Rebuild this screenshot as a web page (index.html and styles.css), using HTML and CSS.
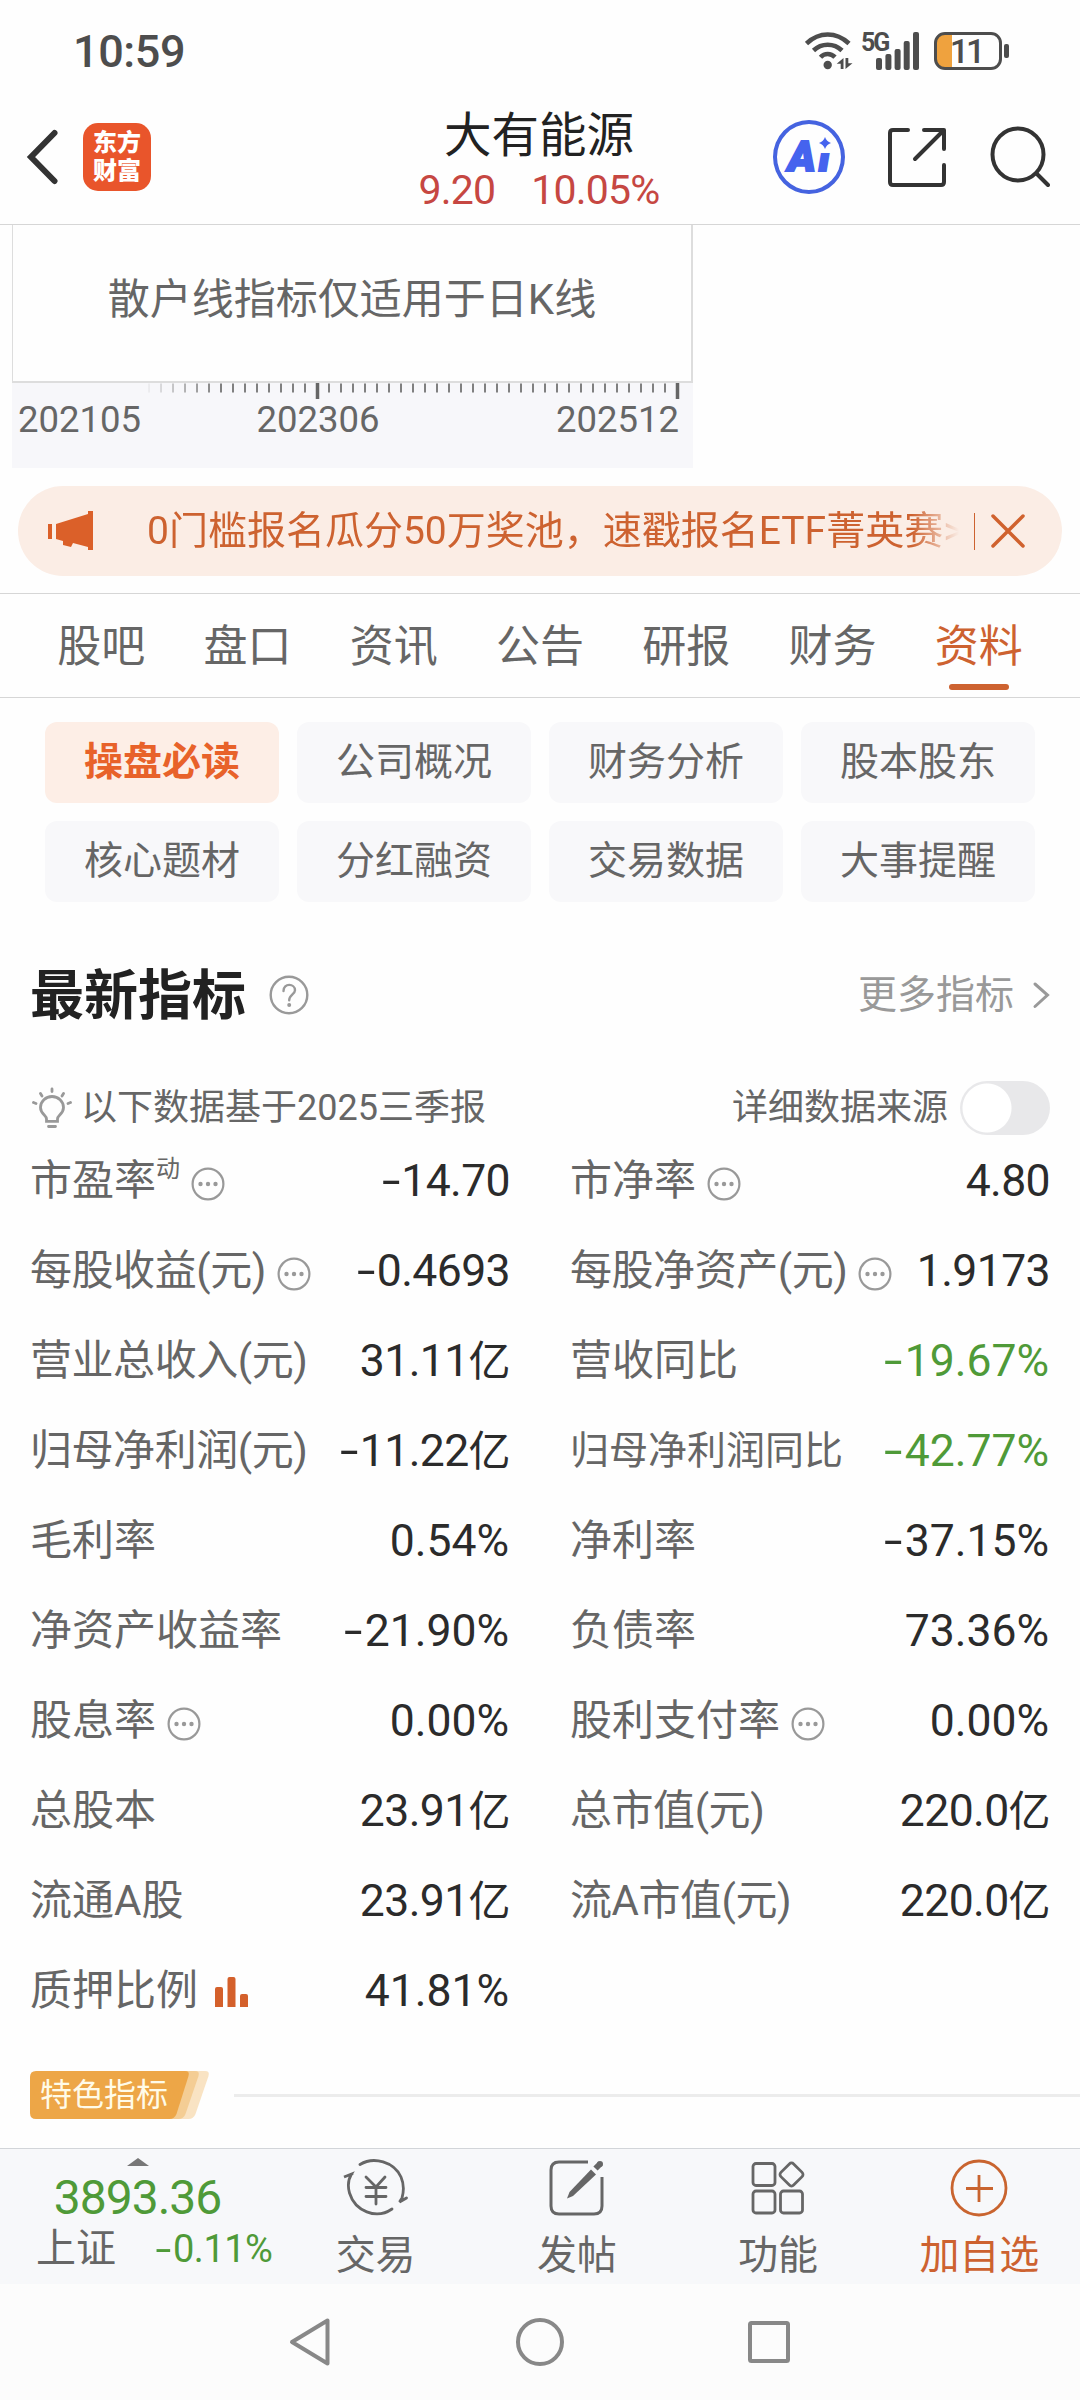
FILE: index.html
```html
<!DOCTYPE html>
<html lang="zh-CN">
<head>
    <meta charset="utf-8">
    <title>大有能源</title>
    <link rel="stylesheet" href="styles.css">
</head>
<body>
<svg width="0" height="0" class="defs">
    <symbol id="more-dots" viewBox="0 0 34 34">
        <circle cx="17" cy="17" r="15.4" fill="none" stroke="#999" stroke-width="2.2"/>
        <circle cx="9.5" cy="17" r="2.2" fill="#999"/><circle cx="17" cy="17" r="2.2" fill="#999"/><circle cx="24.5" cy="17" r="2.2" fill="#999"/>
    </symbol>
</svg>

<div class="status">
    <span class="time">10:59</span>
    <div class="status-icons">
        <svg class="wifi" width="48" height="40" viewBox="0 0 48 40" fill="none" stroke="#4d4d4d" stroke-width="4.6">
            <path d="M1.500 12.500Q11 3.500 22.700 3.500T44 12.500"/>
            <path d="M8.500 19.500Q14.500 13.700 22.700 13.700T37 19.500"/>
            <path d="M15.500 26.200Q18.500 23 22.700 23T30 26.200"/>
            <circle cx="22.700" cy="34" r="4.200" fill="#4d4d4d" stroke="none"/>
            <path d="M38.500 27v11h-2.800v-5.200h-4zM40.500 27v11l7-5.700h-4.200V27z" fill="#4d4d4d" stroke="none"/>
        </svg>
        <span class="net">5G</span>
        <svg class="bars" width="44" height="38" viewBox="0 0 44 38" fill="#4d4d4d">
            <rect x="0" y="26" width="6" height="12" rx="2"/><rect x="9.400" y="22" width="6" height="16" rx="2"/><rect x="18.600" y="17" width="6" height="21" rx="2"/><rect x="27.700" y="9" width="6" height="29" rx="2"/><rect x="37" y="0" width="6" height="38" rx="2"/>
        </svg>
        <div class="battery"><span>11</span></div>
        <i class="nub"></i>
    </div>
</div>

<div class="header">
    <div class="head-left">
        <svg width="34" height="56" viewBox="0 0 34 56" fill="none" stroke="#333" stroke-width="6" stroke-linecap="round"><path d="M29.500 4L6 28l23.500 24"/></svg>
        <div class="logo"><span>东方</span><span>财富</span></div>
    </div>
    <div class="head-title">
        <h1>大有能源</h1>
        <p><span>9.20</span><span>10.05%</span></p>
    </div>
    <div class="head-right">
        <div class="ai"><b>A</b><b class="i">i</b><svg width="12" height="12" viewBox="0 0 12 12"><path d="M6 0Q7.500 4.500 12 6Q7.500 7.500 6 12Q4.500 7.500 0 6Q4.500 4.500 6 0z" fill="#4563ee"/></svg></div>
        <svg class="share" width="60" height="62" viewBox="0 0 60 62" fill="none" stroke="#333" stroke-width="4" stroke-linecap="round" stroke-linejoin="round"><path d="M22 4H7Q4 4 4 7v49q0 3 3 3h48q3 0 3-3V39M38 4h20v19M57 5L29 33"/></svg>
        <svg width="60" height="62" viewBox="0 0 60 62" fill="none" stroke="#333" stroke-width="4" stroke-linecap="round"><ellipse cx="28" cy="28.500" rx="25.500" ry="26"/><path d="M46.500 47.500L58 59"/></svg>
    </div>
</div>

<div class="chart">
    <div class="chart-box">散户线指标仅适用于日K线</div>
    <div class="axis">
        <svg width="680" height="16" viewBox="0 0 680 16">
            <defs>
                <linearGradient id="fade" x1="0" x2="1"><stop offset="0" stop-color="#f7f7fa"/><stop offset="1" stop-color="#f7f7fa" stop-opacity="0"/></linearGradient>
            </defs>
            <path d="M136 5H668" stroke="#808080" stroke-width="9" stroke-dasharray="2 10"/>
            <rect x="130" y="0" width="75" height="11" fill="url(#fade)"/>
            <path d="M305.500 0v16M665.500 0v16" stroke="#666" stroke-width="3.500"/>
        </svg>
        <div class="dates"><span>202105</span><span class="mid">202306</span><span>202512</span></div>
    </div>
</div>

<div class="notice">
    <svg width="46" height="40" viewBox="0 0 46 40" fill="#db6029"><path d="M0 13h4v15H0zM8 13L40 3V0h5v39h-5v-3l-15-4-2 4-8-2v-4l-7-2z"/></svg>
    <div class="notice-text">0门槛报名瓜分50万奖池，速戳报名ETF菁英赛&gt;</div>
    <i class="notice-line"></i>
    <svg width="34" height="34" viewBox="0 0 34 34" stroke="#d0622e" stroke-width="3.500" stroke-linecap="round"><path d="M2 2l30 30M32 2L2 32"/></svg>
</div>

<div class="tabs">
    <span>股吧</span><span>盘口</span><span>资讯</span><span>公告</span><span>研报</span><span>财务</span><span class="on">资料</span>
</div>

<div class="chips">
    <span class="on">操盘必读</span><span>公司概况</span><span>财务分析</span><span>股本股东</span>
    <span>核心题材</span><span>分红融资</span><span>交易数据</span><span>大事提醒</span>
</div>

<div class="section-head">
    <h2>最新指标</h2>
    <svg width="40" height="40" viewBox="0 0 40 40" fill="none" stroke="#999" stroke-width="2.400"><circle cx="20" cy="20" r="18.300"/><path d="M14.500 16c0-8.500 11.500-7.500 11.500-.8 0 4-5.800 4.500-5.800 10" stroke-linecap="round"/><circle cx="20.200" cy="30" r="2" fill="#999" stroke="none"/></svg>
    <div class="more">更多指标<svg width="18" height="28" viewBox="0 0 18 28" fill="none" stroke="#999" stroke-width="3" stroke-linecap="round"><path d="M3 3l12.500 11L3 25.500"/></svg></div>
</div>

<div class="source">
    <svg width="40" height="42" viewBox="0 0 40 42" fill="none" stroke="#999" stroke-width="2.800" stroke-linecap="round"><path d="M14.500 32c0-4-6-5-6-11.500a11.500 11 0 0 1 23 0c0 6.500-6 7.500-6 11.500v2.300h-11z"/><path d="M16.500 39.500h7M20 2v2.500M8.500 6.500L10 9M31.500 6.500L30 9M1.500 15.500l2.500 1M38.500 15.500l-2.500 1"/></svg>
    <span>以下数据基于2025三季报</span>
    <div class="detail">详细数据来源<i class="toggle"></i></div>
</div>

<div class="grid">
    <div class="cell"><span>市盈率</span><sup>动</sup><svg class="dots"><use href="#more-dots"/></svg><b><i>-</i>14.70</b></div>
    <div class="cell"><span>市净率</span><svg class="dots"><use href="#more-dots"/></svg><b>4.80</b></div>
    <div class="cell"><span class="unit">每股收益(元)</span><svg class="dots"><use href="#more-dots"/></svg><b><i>-</i>0.4693</b></div>
    <div class="cell"><span class="unit">每股净资产(元)</span><svg class="dots"><use href="#more-dots"/></svg><b>1.9173</b></div>
    <div class="cell"><span class="unit">营业总收入(元)</span><b>31.11<em>亿</em></b></div>
    <div class="cell"><span>营收同比</span><b class="pct down"><i>-</i>19.67%</b></div>
    <div class="cell"><span class="unit">归母净利润(元)</span><b><i>-</i>11.22<em>亿</em></b></div>
    <div class="cell"><span class="small">归母净利润同比</span><b class="pct down"><i>-</i>42.77%</b></div>
    <div class="cell"><span>毛利率</span><b class="pct">0.54%</b></div>
    <div class="cell"><span>净利率</span><b class="pct"><i>-</i>37.15%</b></div>
    <div class="cell"><span>净资产收益率</span><b class="pct"><i>-</i>21.90%</b></div>
    <div class="cell"><span>负债率</span><b class="pct">73.36%</b></div>
    <div class="cell"><span>股息率</span><svg class="dots"><use href="#more-dots"/></svg><b class="pct">0.00%</b></div>
    <div class="cell"><span>股利支付率</span><svg class="dots"><use href="#more-dots"/></svg><b class="pct">0.00%</b></div>
    <div class="cell"><span>总股本</span><b>23.91<em>亿</em></b></div>
    <div class="cell"><span class="unit">总市值(元)</span><b>220.0<em>亿</em></b></div>
    <div class="cell"><span>流通A股</span><b>23.91<em>亿</em></b></div>
    <div class="cell"><span class="unit">流A市值(元)</span><b>220.0<em>亿</em></b></div>
    <div class="cell"><span>质押比例</span><svg class="mini" width="33" height="30" viewBox="0 0 33 30" fill="#d4602b"><path d="M0 30V12q0-2 2-2h4q2 0 2 2v18zM12.500 30V2q0-2 2-2h4q2 0 2 2v28zM25 30V19q0-2 2-2h4q2 0 2 2v11z"/></svg><b class="pct">41.81%</b></div>
</div>

<div class="feature">
    <div class="tag">
        <svg width="180" height="48" viewBox="0 0 180 48"><path d="M20 0h155q5 0 3.500 5l-13 38q-2 5-7 5H20z" fill="#f9e3c3"/><path d="M20 0h145q5 0 3.500 5l-13 38q-2 5-7 5H20z" fill="#f4cd94"/><path d="M6 0h149q5 0 3.500 5l-12 38q-2 5-7 5H6q-6 0-6-6V6q0-6 6-6z" fill="#eda647"/></svg>
        <span>特色指标</span>
    </div>
    <i></i>
</div>

<div class="bottom">
    <div class="index">
        <svg width="22" height="8" viewBox="0 0 22 8"><path d="M0 8L11 0l11 8z" fill="#777"/></svg>
        <strong>3893.36</strong>
        <p><span>上证</span><em><i>-</i>0.11%</em></p>
    </div>
    <div class="item">
        <svg width="66" height="62" viewBox="0 0 66 62" fill="none" stroke="#666" stroke-width="2.800" stroke-linecap="round"><path d="M17 7.500C31-1 51 5 58 20c3 7 3 14 1 21l-2.500 4 7-4M49 52C33 63 12 54 6.500 36c-2-7-1-14 2-19L1 20l8-3"/><path d="M23 20l10 10 9-10M33 30v17M23 30.500h20M23 39.500h20"/></svg>
        <span>交易</span>
    </div>
    <div class="item">
        <svg width="66" height="62" viewBox="0 0 66 62" fill="none" stroke="#666" stroke-width="3"><path d="M44 5H15Q7 5 7 13v36q0 8 8 8h35q8 0 8-8V20"/><path d="M51.500 11.500l5-5" stroke-width="6"/><circle cx="56" cy="7" r="3" fill="#666" stroke="none"/><path d="M47 12.500l5 5L29 39l-6 2.500 2.500-6.500z" fill="#666" stroke="none"/></svg>
        <span>发帖</span>
    </div>
    <div class="item">
        <svg width="66" height="62" viewBox="0 0 66 62" fill="none" stroke="#666" stroke-width="2.800"><rect x="8" y="6.500" width="22" height="22" rx="3"/><rect x="8" y="34" width="22" height="22" rx="3"/><rect x="35.500" y="34" width="22" height="22" rx="3"/><rect x="37.500" y="8.500" width="18" height="18" rx="3" transform="rotate(45 46.500 17.500)"/></svg>
        <span>功能</span>
    </div>
    <div class="item add">
        <svg width="66" height="62" viewBox="0 0 66 62" fill="none" stroke="#c9642f" stroke-width="2.800"><circle cx="33" cy="31" r="27"/><path d="M33 18v27M20 31.500h27"/></svg>
        <span>加自选</span>
    </div>
</div>

<div class="nav">
    <svg width="48" height="52" viewBox="0 0 48 52"><path d="M6 26L41.500 4.500v43z"/></svg>
    <svg width="52" height="52" viewBox="0 0 52 52"><circle cx="26" cy="26" r="22"/></svg>
    <svg width="48" height="52" viewBox="0 0 48 52"><rect x="5" y="7" width="38" height="38" rx="1.500"/></svg>
</div>
</body>
</html>
```
FILE: styles.css
```css
* {
    box-sizing: border-box;
    margin: 0;
    padding: 0;
}

body {
    width: 1080px;
    height: 2400px;
    overflow: hidden;
    background: #fefefe;
    color: #666;
    font-family: Roboto, "Noto Sans CJK SC", sans-serif;
}

svg {
    display: block;
    flex: none;
}

.defs {
    position: absolute;
}

i, em {
    font-style: normal;
}

/* status bar */
.status {
    display: flex;
    justify-content: space-between;
    align-items: center;
    height: 102px;
    padding: 0 71px 0 73px;
}

.time {
    font-size: 45px;
    font-weight: 500;
    color: #4d4d4d;
    letter-spacing: -0.4px;
}

.status-icons {
    display: flex;
    align-items: center;
    height: 38px;
}

.net {
    align-self: flex-start;
    width: 25px;
    margin-left: 8px;
    margin-right: -10px;
    font-size: 25px;
    line-height: 21px;
    font-weight: 700;
    letter-spacing: -2px;
    color: #4d4d4d;
}

.battery {
    width: 68px;
    height: 38px;
    margin-left: 14px;
    border: 3px solid #4d4d4d;
    border-radius: 11px;
    background: linear-gradient(90deg, #efa23e 15px, transparent 15px);
    text-align: center;
    font-size: 34px;
    line-height: 33px;
    color: #4d4d4d;
    font-weight: 500;
    letter-spacing: -3px;
}

.battery span {
    margin-right: 4px;
}

.nub {
    width: 5px;
    height: 14px;
    margin-left: 2px;
    border-radius: 2px;
    background: #4d4d4d;
}

/* title bar */
.header {
    display: grid;
    grid-template-columns: 1fr auto 1fr;
    align-items: center;
    height: 123px;
    padding: 0 30px 12px 25px;
    border-bottom: 1px solid #d6d6d6;
}

.head-left {
    display: flex;
    align-items: center;
    gap: 24px;
}

.logo {
    width: 68px;
    height: 68px;
    padding-top: 6px;
    border-radius: 15px;
    background: #e9552b;
    color: #fff;
    text-align: center;
    font-size: 24px;
    font-weight: 900;
    line-height: 28px;
}

.logo span {
    display: block;
}

.head-title {
    margin-bottom: -4px;
    padding: 1px 0 0 3px;
    text-align: center;
}

.head-title h1 {
    font-size: 47.5px;
    font-weight: 400;
    line-height: 56px;
    padding-top: 5px;
    color: #222;
}

.head-title p {
    display: flex;
    justify-content: center;
    gap: 36px;
    font-size: 41px;
    line-height: 52px;
    letter-spacing: -0.8px;
    color: #c64742;
}

.head-right {
    display: flex;
    justify-content: flex-end;
    align-items: center;
}

.ai {
    position: relative;
    display: flex;
    justify-content: center;
    align-items: center;
    gap: 3px;
    width: 72px;
    height: 74px;
    border: 4px solid #4563e0;
    border-radius: 50%;
    color: #4563ee;
    font-size: 42px;
    font-style: italic;
    line-height: 60px;
}

.ai b {
    font-weight: 900;
    -webkit-text-stroke: 2px #4563ee;
}

/* the star stands in for the dot */
.ai .i {
    clip-path: inset(26px -4px 0 -4px);
}

.ai svg {
    position: absolute;
    right: 10px;
    top: 13px;
}

.share {
    margin: 0 44px 0 41px;
}

/* chart */
.chart {
    width: 681px;
    margin-left: 12px;
}

.chart-box {
    height: 158px;
    border: 1px solid #ddd;
    border-width: 0 2px 2px 1px;
    text-align: center;
    font-size: 42px;
    line-height: 150px;
}

.axis {
    height: 85px;
    background: #f7f7fa;
}

.dates {
    display: grid;
    grid-template-columns: 1fr 124px 1fr;
    padding: 0 14px 0 6px;
    font-size: 36.5px;
    line-height: 41px;
}

.dates span:last-child {
    text-align: right;
}

.dates .mid {
    margin-left: -30px;
}

/* notice */
.notice {
    display: flex;
    align-items: center;
    width: 1044px;
    height: 90px;
    margin: 18px 18px 17px;
    padding: 0 37px 0 30px;
    border-radius: 45px;
    background: #fbede5;
    color: #cd6230;
}

.notice-text {
    flex: 1;
    margin-left: 53px;
    overflow: hidden;
    white-space: nowrap;
    font-size: 39px;
    line-height: 88px;
    -webkit-mask-image: linear-gradient(90deg, #000 765px, transparent 812px);
}

.notice-line {
    width: 1px;
    height: 37px;
    margin-right: 16px;
    background: #cd6230;
}

/* tabs */
.tabs {
    display: flex;
    height: 105px;
    padding: 0 28px;
    border-top: 1px solid #d6d6d6;
    border-bottom: 1px solid #d6d6d6;
}

.tabs span {
    position: relative;
    flex: 1;
    text-align: center;
    font-size: 44px;
    line-height: 107px;
}

.tabs .on {
    color: #cd6230;
}

.tabs .on::after {
    content: "";
    position: absolute;
    left: 50%;
    bottom: 7px;
    width: 60px;
    height: 6px;
    margin-left: -30px;
    border-radius: 3px;
    background: #cd6230;
}

/* chips */
.chips {
    display: grid;
    grid-template-columns: repeat(4, 234px);
    gap: 18px;
    padding: 24px 45px 0;
}

.chips span {
    height: 81px;
    border-radius: 12px;
    background: #f8f8fa;
    text-align: center;
    font-size: 39px;
    line-height: 80px;
}

.chips .on {
    background: #fdeee6;
    color: #e8622a;
    font-weight: 700;
}

/* latest figures */
.section-head {
    display: flex;
    align-items: center;
    height: 90px;
    margin-top: 48px;
    padding: 0 30px;
}

.section-head h2 {
    margin-right: 23px;
    font-size: 54px;
    line-height: 90px;
    padding-top: 4px;
    color: #222;
}

.more {
    display: flex;
    align-items: center;
    gap: 18px;
    margin-left: auto;
    font-size: 39px;
    line-height: 84px;
    color: #999;
}

.source {
    display: flex;
    align-items: center;
    height: 54px;
    margin-top: 41px;
    padding: 0 30px 0 32px;
    font-size: 36px;
    line-height: 52px;
}

.source > span {
    margin-left: 9px;
}

.detail {
    display: flex;
    align-items: center;
    gap: 12px;
    margin-left: auto;
}

.toggle {
    width: 90px;
    height: 54px;
    border-radius: 27px;
    background: radial-gradient(circle at 27px 27px, #fff 24px, #e8e8ea 25px);
}

.grid {
    display: grid;
    grid-template-columns: 480px 480px;
    column-gap: 60px;
    grid-auto-rows: 90px;
    padding: 0 30px;
}

.cell {
    display: flex;
    align-items: center;
    font-size: 42px;
    line-height: 90px;
    white-space: nowrap;
}

.cell span, .cell b {
    padding-top: 2px;
}

.cell .unit {
    letter-spacing: -0.45px;
}

.cell .small {
    font-size: 39px;
}

.cell sup {
    align-self: flex-start;
    font-size: 24px;
    line-height: 68px;
}

.dots {
    width: 34px;
    height: 34px;
    margin: 8px 0 0 11px;
}

.cell b {
    margin-left: auto;
    font-size: 44.5px;
    font-weight: 400;
    letter-spacing: -0.6px;
    color: #2b2b2b;
}

.cell .pct {
    padding-right: 1px;
    letter-spacing: 0;
}

.cell b em {
    font-size: 42px;
}

.cell .down {
    color: #4f9a38;
}

/* long minus sign */
.cell b i, .index em i {
    display: inline-block;
    margin: 0 5px 0 3px;
    transform: scaleX(1.5);
}

.mini {
    margin: 3px 0 0 17px;
}

.feature {
    display: flex;
    align-items: center;
    height: 48px;
    margin-top: 36px;
    padding-left: 30px;
}

.tag {
    display: grid;
    width: 180px;
    color: #fffbe8;
    font-size: 32px;
    line-height: 48px;
}

.tag svg, .tag span {
    grid-area: 1 / 1;
}

.tag span {
    padding-left: 10px;
}

.feature i {
    flex: 1;
    height: 3px;
    margin-left: 24px;
    background: #ececec;
}

/* bottom bar */
.bottom {
    display: flex;
    height: 136px;
    margin-top: 29px;
    border-top: 1px solid #d2d5d9;
    background: #f7f8fa;
}

.index {
    display: flex;
    flex-direction: column;
    align-items: center;
    width: 275px;
    padding-top: 9px;
    color: #4f9a38;
}

.index strong {
    font-size: 48px;
    font-weight: 400;
    line-height: 64px;
    letter-spacing: -1px;
}

.index p {
    display: flex;
    gap: 39px;
    align-self: flex-start;
    padding-left: 36px;
    font-size: 40px;
    line-height: 38px;
}

.index p span {
    color: #666;
}

.index p em {
    font-size: 38px;
    letter-spacing: -0.5px;
}

.item {
    display: flex;
    flex-direction: column;
    align-items: center;
    flex: 1;
    padding-top: 8px;
    font-size: 40px;
    line-height: 74px;
}

.item span {
    height: 60px;
}

.add {
    color: #cd6230;
}

/* system buttons */
.nav {
    display: flex;
    justify-content: space-between;
    height: 116px;
    padding: 32px 287px 0 286px;
    background: #fcfcfc;
}

.nav svg {
    fill: none;
    stroke: #888;
    stroke-width: 4;
    stroke-linejoin: round;
}
```
